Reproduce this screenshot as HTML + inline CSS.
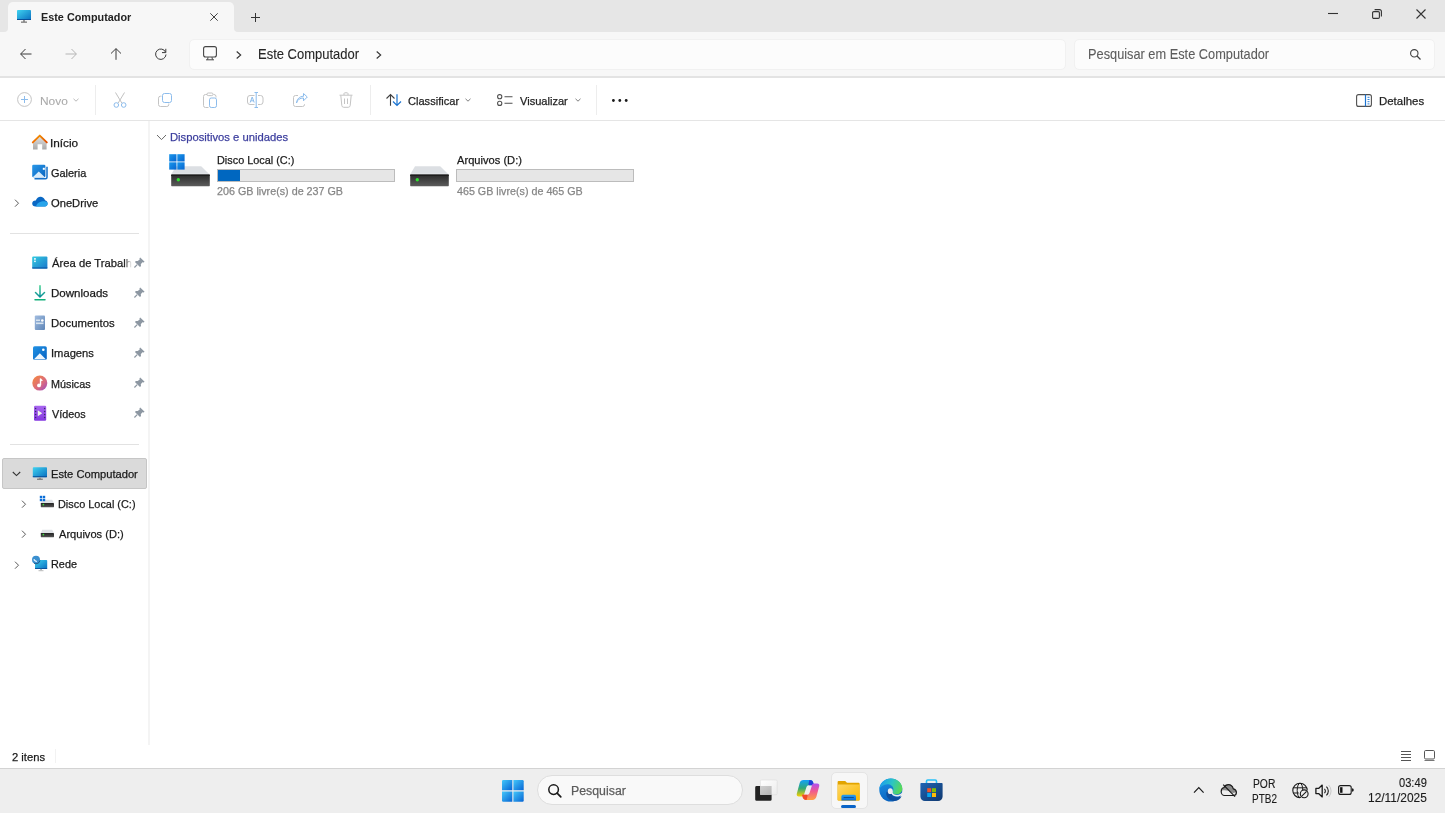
<!DOCTYPE html>
<html><head><meta charset="utf-8">
<style>
*{margin:0;padding:0;box-sizing:border-box}
html,body{width:1445px;height:813px;overflow:hidden;background:#fff;font-family:"Liberation Sans",sans-serif;color:#1a1a1a}
.a{position:absolute}
.t{position:absolute;white-space:nowrap;line-height:1;transform-origin:0 0;-webkit-text-stroke:0.25px currentColor}
svg{position:absolute;overflow:visible}
</style></head><body>
<!-- title bar -->
<div class="a" style="left:0;top:0;width:1445px;height:77px;background:#f7f7f7"></div>
<div class="a" style="left:0;top:0;width:1445px;height:2px;background:#e6e6e6"></div>
<div class="a" style="left:0;top:0;width:8px;height:31.5px;background:#e6e6e6;border-bottom-right-radius:4px"></div>
<div class="a" style="left:234px;top:0;width:1211px;height:31.5px;background:#e6e6e6;border-bottom-left-radius:4px"></div>
<div class="a" style="left:8px;top:2px;width:226px;height:8px;background:#e6e6e6"></div>
<div class="a" style="left:8px;top:2px;width:226px;height:30px;background:#f7f7f7;border-radius:5px 5px 0 0"></div>
<!-- nav border -->
<div class="a" style="left:0;top:76px;width:1445px;height:2px;background:#e3e3e3"></div>
<!-- address box -->
<div class="a" style="left:189px;top:39px;width:877px;height:31px;background:#fcfcfc;border:1px solid #f1f1f1;border-radius:5px"></div>
<!-- search box -->
<div class="a" style="left:1074px;top:39px;width:361px;height:31px;background:#fcfcfc;border:1px solid #f1f1f1;border-radius:5px"></div>
<!-- command bar -->
<div class="a" style="left:0;top:120px;width:1445px;height:1px;background:#e5e5e5"></div>
<div class="a" style="left:95px;top:85px;width:1px;height:30px;background:#ededed"></div>
<div class="a" style="left:370px;top:85px;width:1px;height:30px;background:#ededed"></div>
<div class="a" style="left:596px;top:85px;width:1px;height:30px;background:#ededed"></div>
<!-- sidebar -->
<div class="a" style="left:148px;top:121px;width:1.5px;height:624px;background:#f4f4f4"></div>
<div class="a" style="left:55px;top:749px;width:1px;height:14px;background:#f2f2f2"></div>
<div class="a" style="left:10px;top:232.5px;width:129px;height:1.2px;background:#e2e2e2"></div>
<div class="a" style="left:10px;top:443.5px;width:129px;height:1.2px;background:#e2e2e2"></div>
<div class="a" style="left:2px;top:458px;width:145px;height:31px;background:#dadada;border:1px solid #c6c6c6;border-radius:2px"></div>
<!-- content -->
<div class="a" style="left:217px;top:169px;width:178px;height:13px;background:#e6e6e6;border:1px solid #bcbcbc"></div>
<div class="a" style="left:218px;top:170px;width:22px;height:11px;background:#0067c0"></div>
<div class="a" style="left:456px;top:169px;width:178px;height:13px;background:#e6e6e6;border:1px solid #bcbcbc"></div>
<!-- status bar -->
<!-- taskbar -->
<div class="a" style="left:0;top:768px;width:1445px;height:45px;background:#eeeeee;border-top:1px solid #d3d3d3"></div>
<div class="a" style="left:537px;top:775px;width:206px;height:30px;background:#f9f9f9;border:1px solid #dedede;border-radius:15px"></div>

<!-- tab icon -->
<svg style="left:17px;top:10px" width="14" height="13" viewBox="0 0 14 13">
<defs><linearGradient id="mon" x1="0" y1="0" x2="1" y2="1"><stop offset="0" stop-color="#3fd3f0"/><stop offset="1" stop-color="#0a6fc0"/></linearGradient></defs>
<rect x="0" y="0" width="14" height="10" rx="0.8" fill="url(#mon)"/>
<rect x="0" y="9" width="14" height="1" fill="#0a4f9a"/>
<rect x="6" y="10" width="2" height="2" fill="#9a9a9a"/>
<rect x="4" y="11.5" width="6" height="1.3" fill="#7a7a7a"/>
</svg>
<svg style="left:210px;top:12.5px" width="8" height="8" viewBox="0 0 8 8"><path d="M0.3 0.3L7.7 7.7M7.7 0.3L0.3 7.7" stroke="#3a3a3a" stroke-width="0.95"/></svg>
<svg style="left:251px;top:13px" width="9" height="9" viewBox="0 0 9 9"><path d="M4.5 0V9M0 4.5H9" stroke="#333" stroke-width="1"/></svg>
<!-- window controls -->
<svg style="left:1328px;top:12px" width="10" height="3" viewBox="0 0 10 3"><path d="M0 1.5H10" stroke="#333" stroke-width="1.1"/></svg>
<svg style="left:1372px;top:9px" width="10" height="10" viewBox="0 0 10 10"><rect x="0.6" y="2.6" width="6.8" height="6.8" rx="1.2" fill="none" stroke="#333" stroke-width="1.1"/><path d="M2.6 0.6H7.6A1.8 1.8 0 0 1 9.4 2.4V7.4" fill="none" stroke="#333" stroke-width="1.1"/></svg>
<svg style="left:1416px;top:9px" width="10" height="10" viewBox="0 0 10 10"><path d="M0.5 0.5L9.5 9.5M9.5 0.5L0.5 9.5" stroke="#333" stroke-width="1.1"/></svg>
<!-- nav arrows -->
<svg style="left:20px;top:48px" width="12" height="12" viewBox="0 0 12 12"><path d="M11.5 6H0.8M5.5 1L0.6 6L5.5 11" fill="none" stroke="#3a3a3a" stroke-width="1"/></svg>
<svg style="left:65px;top:48px" width="12" height="12" viewBox="0 0 12 12"><path d="M0.5 6H11.2M6.5 1L11.4 6L6.5 11" fill="none" stroke="#b5b5b5" stroke-width="1"/></svg>
<svg style="left:110px;top:48px" width="12" height="12" viewBox="0 0 12 12"><path d="M6 11.8V0.8M1 5.5L6 0.6L11 5.5" fill="none" stroke="#3a3a3a" stroke-width="1"/></svg>
<svg style="left:155px;top:48px" width="12" height="12" viewBox="0 0 12 12"><path d="M10.6 4.2A5.2 5.2 0 1 0 11 6.5" fill="none" stroke="#3a3a3a" stroke-width="1"/><path d="M10.8 0.8V4.6H7" fill="none" stroke="#3a3a3a" stroke-width="1"/></svg>
<!-- address icons -->
<svg style="left:203px;top:46px" width="14" height="15" viewBox="0 0 14 15"><rect x="0.6" y="0.6" width="12.8" height="10.4" rx="2" fill="none" stroke="#454545" stroke-width="1.1"/><path d="M3 13.8H11M5 11.2L4.6 13.6M9 11.2L9.4 13.6" fill="none" stroke="#454545" stroke-width="1"/></svg>
<svg style="left:236px;top:51px" width="6" height="8" viewBox="0 0 6 8"><path d="M0.7 0.5L4.7 4L0.7 7.5" fill="none" stroke="#333" stroke-width="1.1"/></svg>
<svg style="left:376px;top:51px" width="6" height="8" viewBox="0 0 6 8"><path d="M0.7 0.5L4.7 4L0.7 7.5" fill="none" stroke="#333" stroke-width="1.1"/></svg>
<svg style="left:1410px;top:49px" width="11" height="11" viewBox="0 0 11 11"><circle cx="4.3" cy="4.3" r="3.7" fill="none" stroke="#404040" stroke-width="1.1"/><path d="M7 7L10.5 10.5" stroke="#404040" stroke-width="1.2"/></svg>

<!-- command bar icons -->
<svg style="left:17px;top:92px" width="15" height="15" viewBox="0 0 15 15"><circle cx="7.5" cy="7.5" r="6.9" fill="none" stroke="#c4c4c4" stroke-width="1"/><path d="M7.5 4V11M4 7.5H11" stroke="#8cbcec" stroke-width="1"/></svg>
<svg style="left:73px;top:98px" width="6" height="4" viewBox="0 0 6 4"><path d="M0.5 0.8L3 3.2L5.5 0.8" fill="none" stroke="#b0b0b0" stroke-width="0.9"/></svg>
<svg style="left:113px;top:92px" width="14" height="16" viewBox="0 0 14 16"><path d="M2.5 0.5L8.8 11M11.5 0.5L5.2 11" stroke="#c2c2c2" stroke-width="1"/><circle cx="3.3" cy="13" r="2.3" fill="none" stroke="#8cbcec" stroke-width="1"/><circle cx="10.7" cy="13" r="2.3" fill="none" stroke="#8cbcec" stroke-width="1"/></svg>
<svg style="left:158px;top:93px" width="14" height="14" viewBox="0 0 14 14"><path d="M3.5 3.2H2.5A2 2 0 0 0 0.5 5.2V11.5A2 2 0 0 0 2.5 13.5H8.8A2 2 0 0 0 10.8 11.5V10.5" fill="none" stroke="#c4c4c4" stroke-width="1"/><rect x="4.5" y="0.5" width="9" height="9" rx="2" fill="none" stroke="#8cbcec" stroke-width="1"/></svg>
<svg style="left:203px;top:92px" width="14" height="16" viewBox="0 0 14 16"><path d="M4 2.5H2.5A2 2 0 0 0 0.5 4.5V13.5A2 2 0 0 0 2.5 15.5H5.5M10.5 2.5H11A2 2 0 0 1 13 4.5V5.5" fill="none" stroke="#c4c4c4" stroke-width="1"/><rect x="4" y="1" width="6" height="2.6" rx="1.2" fill="none" stroke="#c4c4c4" stroke-width="1"/><rect x="6.5" y="6" width="7" height="9.5" rx="1.8" fill="none" stroke="#8cbcec" stroke-width="1"/></svg>
<svg style="left:247px;top:92px" width="17" height="16" viewBox="0 0 17 16"><path d="M7.5 3.5H3A2.5 2.5 0 0 0 0.5 6V10A2.5 2.5 0 0 0 3 12.5H7.5M11 3.5H13.5A2.5 2.5 0 0 1 16 6V10A2.5 2.5 0 0 1 13.5 12.5H11" fill="none" stroke="#c4c4c4" stroke-width="1"/><path d="M9.2 0.8V15.2M7.5 0.5H11M7.5 15.5H11" stroke="#8cbcec" stroke-width="1"/><path d="M3.2 10.5L5.2 5L7.2 10.5M3.9 8.8H6.5" fill="none" stroke="#8cbcec" stroke-width="1"/></svg>
<svg style="left:293px;top:93px" width="15" height="14" viewBox="0 0 15 14"><path d="M5 2.5H2.5A2 2 0 0 0 0.5 4.5V11.5A2 2 0 0 0 2.5 13.5H9.5A2 2 0 0 0 11.5 11.5V11" fill="none" stroke="#c4c4c4" stroke-width="1"/><path d="M3.5 10C4.5 6.5 7 5 10.5 5V7.8L14.3 4L10.5 0.5V3.3C6.5 3.3 4 6 3.5 10Z" fill="none" stroke="#8cbcec" stroke-width="1" stroke-linejoin="round"/></svg>
<svg style="left:339px;top:92px" width="14" height="16" viewBox="0 0 14 16"><path d="M0.5 3.2H13.5M5 3V1.5A1 1 0 0 1 6 0.8H8A1 1 0 0 1 9 1.5V3M1.8 3.5L2.8 13.5A2 2 0 0 0 4.8 15.3H9.2A2 2 0 0 0 11.2 13.5L12.2 3.5M5.5 6.5V12M8.5 6.5V12" fill="none" stroke="#c4c4c4" stroke-width="1"/></svg>
<svg style="left:386px;top:94px" width="16" height="12" viewBox="0 0 16 12"><path d="M4.5 11.8V0.8M0.5 4.5L4.5 0.6L8.5 4.5" fill="none" stroke="#404040" stroke-width="1.1"/><path d="M11 0.2V11.2M7 7.5L11 11.4L15 7.5" fill="none" stroke="#1a73d0" stroke-width="1.2"/></svg>
<svg style="left:465px;top:98px" width="6" height="4" viewBox="0 0 6 4"><path d="M0.5 0.8L3 3.2L5.5 0.8" fill="none" stroke="#707070" stroke-width="0.9"/></svg>
<svg style="left:497px;top:94px" width="16" height="12" viewBox="0 0 16 12"><rect x="0.6" y="0.6" width="4.2" height="4.2" rx="2" fill="none" stroke="#505050" stroke-width="1.1"/><rect x="0.6" y="7.2" width="4.2" height="4.2" rx="2" fill="none" stroke="#505050" stroke-width="1.1"/><path d="M7.5 2.7H15.5M7.5 9.3H15.5" stroke="#505050" stroke-width="1.1"/></svg>
<svg style="left:575px;top:98px" width="6" height="4" viewBox="0 0 6 4"><path d="M0.5 0.8L3 3.2L5.5 0.8" fill="none" stroke="#707070" stroke-width="0.9"/></svg>
<svg style="left:612px;top:99px" width="16" height="3" viewBox="0 0 16 3"><circle cx="1.4" cy="1.5" r="1.4" fill="#1a1a1a"/><circle cx="7.8" cy="1.5" r="1.4" fill="#1a1a1a"/><circle cx="14.2" cy="1.5" r="1.4" fill="#1a1a1a"/></svg>
<svg style="left:1356px;top:94px" width="16" height="13" viewBox="0 0 16 13"><rect x="0.6" y="0.6" width="14.8" height="11.8" rx="2" fill="none" stroke="#505050" stroke-width="1.1"/><path d="M9.5 0.6V12.4" stroke="#1a73d0" stroke-width="1.2"/><path d="M11.5 3.3H13.5M11.5 5.5H13.5M11.5 7.7H13.5M11.5 9.9H13.5" stroke="#1a73d0" stroke-width="0.9"/></svg>

<!-- sidebar icons -->
<svg style="left:32px;top:134px" width="16" height="16" viewBox="0 0 16 16">
<defs><linearGradient id="hb" x1="0" y1="0" x2="0" y2="1"><stop offset="0" stop-color="#e2e2e2"/><stop offset="1" stop-color="#a9a9a9"/></linearGradient>
<linearGradient id="hr" x1="0" y1="0" x2="1" y2="0"><stop offset="0" stop-color="#f36d00"/><stop offset="0.5" stop-color="#f08a00"/><stop offset="1" stop-color="#e04b00"/></linearGradient></defs>
<path d="M1 8.5L7.8 2L14.6 8.5V15.6H10.2V10.2H5.6V15.6H1Z" fill="url(#hb)"/>
<path d="M0.8 8.4L7.8 1.6L14.8 8.4" fill="none" stroke="url(#hr)" stroke-width="1.9" stroke-linecap="round" stroke-linejoin="round"/>
</svg>
<svg style="left:32px;top:164px" width="16" height="16" viewBox="0 0 16 16">
<defs><linearGradient id="gb" x1="0" y1="0" x2="1" y2="1"><stop offset="0" stop-color="#2a98e8"/><stop offset="1" stop-color="#0864c0"/></linearGradient></defs>
<path d="M2.5 14.8H13.5A1.5 1.5 0 0 0 15 13.3V2.8" fill="none" stroke="#1570c8" stroke-width="1.5"/>
<rect x="0.2" y="0.8" width="13.2" height="12.4" rx="1.3" fill="url(#gb)"/>
<path d="M1 13L6.8 7.5L12.6 13Z" fill="#d8ecfb"/>
<rect x="10.8" y="3.8" width="2" height="2" fill="#fff"/>
</svg>
<svg style="left:32px;top:196px" width="16" height="12" viewBox="0 0 16 12">
<path d="M3.5 10.5C1.5 10.5 0.2 9.2 0.2 7.5C0.2 5.5 2 4.2 3.8 4.5C4.6 2 6.8 0.5 9 0.8C11 1 12.5 2.5 13 4.2C14.8 4.5 15.6 6 15.6 7.5C15.6 9.2 14.3 10.5 12.6 10.5Z" fill="#0a68c4"/>
<path d="M4 10.5C4.5 8 6.5 6 9.5 5.5C12 5 14 5.5 15.4 6.5C15.7 7 15.7 7.8 15.6 8.2C15.3 9.7 14 10.6 12.6 10.6Z" fill="#28a4ea"/>
</svg>
<svg style="left:32px;top:256px" width="16" height="13" viewBox="0 0 16 13">
<defs><linearGradient id="db" x1="0" y1="0" x2="1" y2="1"><stop offset="0" stop-color="#34cbe0"/><stop offset="1" stop-color="#1a78cc"/></linearGradient></defs>
<rect x="0.2" y="0.6" width="15.2" height="12" rx="1" fill="url(#db)"/>
<rect x="0.2" y="11.4" width="15.2" height="1.2" fill="#0a5aa8"/>
<rect x="2.2" y="2" width="1.5" height="1.8" fill="#fff"/><rect x="2.2" y="4.6" width="1.5" height="1.5" fill="#fff"/>
</svg>
<svg style="left:34px;top:285px" width="12" height="16" viewBox="0 0 12 16">
<defs><linearGradient id="dl" x1="0" y1="0" x2="0" y2="1"><stop offset="0" stop-color="#3ccf8e"/><stop offset="1" stop-color="#0a8c9a"/></linearGradient></defs>
<path d="M6 0.8V11.8M1.5 7.5L6 12L10.5 7.5" fill="none" stroke="url(#dl)" stroke-width="1.5" stroke-linecap="round"/>
<path d="M1 14.7H11" stroke="#12b07a" stroke-width="1.5" stroke-linecap="round"/>
</svg>
<svg style="left:34px;top:315px" width="12" height="16" viewBox="0 0 12 16">
<defs><linearGradient id="doc" x1="0" y1="0" x2="1" y2="1"><stop offset="0" stop-color="#a2bde0"/><stop offset="1" stop-color="#5f86b8"/></linearGradient></defs>
<rect x="0.8" y="0.6" width="10.2" height="14.4" rx="1" fill="url(#doc)"/>
<rect x="2" y="4.5" width="4" height="1.5" fill="#d8e4f0"/><rect x="2" y="7.5" width="7.5" height="1.6" fill="#d8e4f0"/>
<circle cx="8.3" cy="5.5" r="1.3" fill="#fff"/>
</svg>
<svg style="left:32px;top:345px" width="16" height="16" viewBox="0 0 16 16">
<defs><linearGradient id="im" x1="0" y1="0" x2="1" y2="1"><stop offset="0" stop-color="#2292e4"/><stop offset="1" stop-color="#0662c2"/></linearGradient></defs>
<rect x="1" y="1.2" width="13.8" height="13.6" rx="1.6" fill="url(#im)"/>
<path d="M2 14.2L7.8 8.3L13.8 14.2Z" fill="#eef6fd"/>
<circle cx="11.3" cy="4.7" r="1.3" fill="#fff"/>
</svg>
<svg style="left:32px;top:375px" width="16" height="16" viewBox="0 0 16 16">
<defs><linearGradient id="mu" x1="0" y1="0" x2="1" y2="1"><stop offset="0" stop-color="#f98a3a"/><stop offset="0.6" stop-color="#d86a80"/><stop offset="1" stop-color="#9a48c8"/></linearGradient></defs>
<circle cx="7.8" cy="8.1" r="7.5" fill="url(#mu)"/>
<path d="M8.5 3.5V10.2" stroke="#fff" stroke-width="1.4"/><path d="M8.5 3.2L11 5.5L9 6.3Z" fill="#fff"/>
<circle cx="7" cy="10.4" r="1.9" fill="#fff"/>
</svg>
<svg style="left:33px;top:405px" width="14" height="16" viewBox="0 0 14 16">
<defs><linearGradient id="vi" x1="0" y1="0" x2="0" y2="1"><stop offset="0" stop-color="#a866f0"/><stop offset="1" stop-color="#8438e0"/></linearGradient></defs>
<rect x="1" y="0.8" width="12.2" height="15" rx="1.2" fill="url(#vi)"/>
<g fill="#3a2a6a"><circle cx="2.6" cy="3.4" r="0.75"/><circle cx="2.6" cy="6.5" r="0.75"/><circle cx="2.6" cy="9.5" r="0.75"/><circle cx="2.6" cy="12.5" r="0.75"/><circle cx="11.6" cy="3.4" r="0.75"/><circle cx="11.6" cy="6.5" r="0.75"/><circle cx="11.6" cy="9.5" r="0.75"/><circle cx="11.6" cy="12.5" r="0.75"/></g>
<path d="M4.8 5.2L9.2 8.3L4.8 11.3Z" fill="#eef5e8"/>
</svg>
<!-- pins -->
<svg style="left:134px;top:257px" width="11" height="11" viewBox="0 0 11 11"><path d="M6.2 0.4L10.6 4.8L9.6 5.4L8.4 5.2L6.8 7.2L7 9L6 10L0.9 4.9L1.9 3.9L3.7 4.1L5.7 2.5L5.5 1.3Z" fill="#8d97a2"/><path d="M3.2 7.7L0.4 10.5" stroke="#8d97a2" stroke-width="1.2"/></svg>
<svg style="left:134px;top:287px" width="11" height="11" viewBox="0 0 11 11"><path d="M6.2 0.4L10.6 4.8L9.6 5.4L8.4 5.2L6.8 7.2L7 9L6 10L0.9 4.9L1.9 3.9L3.7 4.1L5.7 2.5L5.5 1.3Z" fill="#8d97a2"/><path d="M3.2 7.7L0.4 10.5" stroke="#8d97a2" stroke-width="1.2"/></svg>
<svg style="left:134px;top:317px" width="11" height="11" viewBox="0 0 11 11"><path d="M6.2 0.4L10.6 4.8L9.6 5.4L8.4 5.2L6.8 7.2L7 9L6 10L0.9 4.9L1.9 3.9L3.7 4.1L5.7 2.5L5.5 1.3Z" fill="#8d97a2"/><path d="M3.2 7.7L0.4 10.5" stroke="#8d97a2" stroke-width="1.2"/></svg>
<svg style="left:134px;top:347px" width="11" height="11" viewBox="0 0 11 11"><path d="M6.2 0.4L10.6 4.8L9.6 5.4L8.4 5.2L6.8 7.2L7 9L6 10L0.9 4.9L1.9 3.9L3.7 4.1L5.7 2.5L5.5 1.3Z" fill="#8d97a2"/><path d="M3.2 7.7L0.4 10.5" stroke="#8d97a2" stroke-width="1.2"/></svg>
<svg style="left:134px;top:377px" width="11" height="11" viewBox="0 0 11 11"><path d="M6.2 0.4L10.6 4.8L9.6 5.4L8.4 5.2L6.8 7.2L7 9L6 10L0.9 4.9L1.9 3.9L3.7 4.1L5.7 2.5L5.5 1.3Z" fill="#8d97a2"/><path d="M3.2 7.7L0.4 10.5" stroke="#8d97a2" stroke-width="1.2"/></svg>
<svg style="left:134px;top:407px" width="11" height="11" viewBox="0 0 11 11"><path d="M6.2 0.4L10.6 4.8L9.6 5.4L8.4 5.2L6.8 7.2L7 9L6 10L0.9 4.9L1.9 3.9L3.7 4.1L5.7 2.5L5.5 1.3Z" fill="#8d97a2"/><path d="M3.2 7.7L0.4 10.5" stroke="#8d97a2" stroke-width="1.2"/></svg>

<svg style="left:32px;top:466px" width="16" height="15" viewBox="0 0 16 15">
<rect x="0.8" y="1.2" width="14.2" height="10" rx="0.8" fill="url(#mon)"/>
<rect x="0.8" y="10.2" width="14.2" height="1" fill="#0a4f9a"/>
<rect x="6.8" y="11.2" width="2.2" height="2" fill="#9a9a9a"/>
<rect x="5" y="12.6" width="5.8" height="1.3" fill="#7a7a7a"/>
</svg>
<svg style="left:39px;top:495px" width="16" height="13" viewBox="0 0 16 13">
<defs><linearGradient id="dkf" x1="0" y1="0" x2="0" y2="1"><stop offset="0" stop-color="#222"/><stop offset="1" stop-color="#555"/></linearGradient></defs>
<path d="M3.2 4.8H13.2L15 8H1.8Z" fill="#dfe2e6"/>
<rect x="1.8" y="8" width="13.2" height="4.2" rx="0.4" fill="url(#dkf)"/>
<circle cx="4.4" cy="9.6" r="0.9" fill="#3ed83e"/>
<g fill="#0a6ed8"><rect x="0.8" y="0.8" width="2.4" height="2.4"/><rect x="3.8" y="0.8" width="2.4" height="2.4"/><rect x="0.8" y="3.8" width="2.4" height="2.4"/><rect x="3.8" y="3.8" width="2.4" height="2.4"/></g>
</svg>
<svg style="left:39px;top:525px" width="16" height="13" viewBox="0 0 16 13">
<path d="M3.2 4.8H13.2L15 8H1.8Z" fill="#dfe2e6"/>
<rect x="1.8" y="8" width="13.2" height="4.2" rx="0.4" fill="url(#dkf)"/>
<circle cx="4.4" cy="9.6" r="0.9" fill="#3ed83e"/>
</svg>
<svg style="left:32px;top:555px" width="16" height="17" viewBox="0 0 16 17">
<rect x="3" y="5" width="12.2" height="8.9" rx="0.8" fill="url(#mon)"/>
<rect x="3" y="13" width="12.2" height="0.9" fill="#0a4f9a"/>
<rect x="8.3" y="13.9" width="1.5" height="1.5" fill="#9aa"/><rect x="6.5" y="15.2" width="5" height="1" fill="#bbb"/>
<circle cx="4" cy="4.7" r="4" fill="#3a8fcf"/>
<path d="M1.8 4.3C2.5 5.5 3.5 6.2 4.8 6.6" stroke="#e8f6ff" stroke-width="1.4" fill="none"/>
<path d="M2 8.2A4 4 0 0 0 8 5.5" stroke="#1f4f7a" stroke-width="0.9" fill="none"/>
</svg>
<!-- sidebar chevrons -->
<svg style="left:14px;top:199px" width="6" height="9" viewBox="0 0 6 9"><path d="M1 0.7L4.5 4.2L1 7.7" fill="none" stroke="#5a5a5a" stroke-width="1"/></svg>
<svg style="left:12px;top:471px" width="9" height="6" viewBox="0 0 9 6"><path d="M0.8 1L4.5 4.6L8.2 1" fill="none" stroke="#333" stroke-width="1.1"/></svg>
<svg style="left:21px;top:500px" width="6" height="9" viewBox="0 0 6 9"><path d="M1 0.7L4.5 4.2L1 7.7" fill="none" stroke="#5a5a5a" stroke-width="1"/></svg>
<svg style="left:21px;top:530px" width="6" height="9" viewBox="0 0 6 9"><path d="M1 0.7L4.5 4.2L1 7.7" fill="none" stroke="#5a5a5a" stroke-width="1"/></svg>
<svg style="left:14px;top:560.5px" width="6" height="9" viewBox="0 0 6 9"><path d="M1 0.7L4.5 4.2L1 7.7" fill="none" stroke="#5a5a5a" stroke-width="1"/></svg>
<!-- content -->
<svg style="left:156px;top:134px" width="11" height="7" viewBox="0 0 11 7"><path d="M1 1L5.5 5.6L10 1" fill="none" stroke="#6a6a6a" stroke-width="1"/></svg>
<svg style="left:168px;top:153px" width="44" height="35" viewBox="0 0 44 35">
<defs><linearGradient id="df" x1="0" y1="0" x2="0" y2="1"><stop offset="0" stop-color="#2a2a2a"/><stop offset="1" stop-color="#5c5c5c"/></linearGradient>
<linearGradient id="wl" x1="0" y1="0" x2="1" y2="1"><stop offset="0" stop-color="#1a98ec"/><stop offset="1" stop-color="#0664d0"/></linearGradient></defs>
<path d="M8 13.2H33.2L41.6 21.6H3.2Z" fill="#dcdfe3"/>
<path d="M3.2 21.2H41.6" stroke="#f4f5f6" stroke-width="0.8"/>
<rect x="3.2" y="21.6" width="38.6" height="11.6" rx="0.6" fill="url(#df)"/>
<rect x="3.2" y="21.6" width="38.6" height="1.2" fill="#1a1a1a"/>
<circle cx="10.3" cy="26.8" r="1.7" fill="#30e030"/>
<g fill="url(#wl)"><rect x="1.2" y="1.2" width="7.3" height="7.3"/><rect x="9.3" y="1.2" width="7.3" height="7.3"/><rect x="1.2" y="9.3" width="7.3" height="7.3"/><rect x="9.3" y="9.3" width="7.3" height="7.3"/></g>
</svg>
<svg style="left:407px;top:153px" width="44" height="35" viewBox="0 0 44 35">
<path d="M8 13.2H33.2L41.6 21.6H3.2Z" fill="#dcdfe3"/>
<path d="M3.2 21.2H41.6" stroke="#f4f5f6" stroke-width="0.8"/>
<rect x="3.2" y="21.6" width="38.6" height="11.6" rx="0.6" fill="url(#df)"/>
<rect x="3.2" y="21.6" width="38.6" height="1.2" fill="#1a1a1a"/>
<circle cx="10.3" cy="26.8" r="1.7" fill="#30e030"/>
</svg>
<!-- status bar icons -->
<svg style="left:1401px;top:750px" width="12" height="12" viewBox="0 0 12 12"><path d="M0 1.5H10M0 4.5H10M0 7.5H10M0 10.5H10" stroke="#555" stroke-width="1"/></svg>
<svg style="left:1424px;top:750px" width="12" height="12" viewBox="0 0 12 12"><rect x="0.5" y="0.5" width="10" height="8.5" rx="1.2" fill="none" stroke="#555" stroke-width="1"/><path d="M0.5 10.5H10.5" stroke="#777" stroke-width="1"/></svg>

<!-- taskbar icons -->
<svg style="left:502px;top:780px" width="22" height="22" viewBox="0 0 22 22">
<defs><linearGradient id="wg" x1="0" y1="0" x2="1" y2="1"><stop offset="0" stop-color="#44c8fa"/><stop offset="1" stop-color="#0664d4"/></linearGradient></defs>
<path d="M1.2 0H10.3V10.3H0V1.2A1.2 1.2 0 0 1 1.2 0Z" fill="url(#wg)"/>
<path d="M11.4 0H20.5A1.2 1.2 0 0 1 21.7 1.2V10.3H11.4Z" fill="url(#wg)"/>
<path d="M0 11.4H10.3V21.7H1.2A1.2 1.2 0 0 1 0 20.5Z" fill="url(#wg)"/>
<path d="M11.4 11.4H21.7V20.5A1.2 1.2 0 0 1 20.5 21.7H11.4Z" fill="url(#wg)"/>
</svg>
<svg style="left:548px;top:784px" width="14" height="14" viewBox="0 0 14 14"><circle cx="5.6" cy="5.6" r="4.8" fill="none" stroke="#1a1a1a" stroke-width="1.5"/><path d="M9.1 9.1L12.8 12.8" stroke="#1a1a1a" stroke-width="1.7" stroke-linecap="round"/></svg>
<svg style="left:755px;top:779px" width="24" height="23" viewBox="0 0 24 23">
<defs><linearGradient id="tv" x1="0" y1="0" x2="1" y2="1"><stop offset="0" stop-color="#ffffff"/><stop offset="1" stop-color="#ececec"/></linearGradient>
<linearGradient id="tvg" x1="0" y1="0" x2="1" y2="1"><stop offset="0" stop-color="#d0d0d0"/><stop offset="1" stop-color="#b4b4b4"/></linearGradient></defs>
<rect x="5.4" y="1" width="16.8" height="14.8" rx="1.2" fill="url(#tv)" stroke="#dcdcdc" stroke-width="0.6"/>
<path d="M1.6 7H5.2V15.8H16.6V20.4A1.4 1.4 0 0 1 15.2 21.8H1.6A1.4 1.4 0 0 1 0.2 20.4V8.4A1.4 1.4 0 0 1 1.6 7Z" fill="#222"/>
<rect x="5.2" y="7" width="11.4" height="8.8" fill="url(#tvg)"/>
</svg>
<svg style="left:796px;top:779px" width="24" height="22" viewBox="0 0 24 22">
<defs><linearGradient id="cp1" x1="0" y1="0" x2="0" y2="1"><stop offset="0" stop-color="#12a0f8"/><stop offset="0.5" stop-color="#30a878"/><stop offset="1" stop-color="#f8d000"/></linearGradient>
<linearGradient id="cp2" x1="0" y1="0" x2="0" y2="1"><stop offset="0" stop-color="#b050f0"/><stop offset="0.45" stop-color="#f05890"/><stop offset="1" stop-color="#ffa040"/></linearGradient></defs>
<path d="M7.5 1H14C15.6 1 16.6 1.8 17.2 3.4L18 6.2H12.8C11.6 6.2 10.8 6.9 10.4 8.2L8 15.8C7.6 17 6.8 17.4 5.6 17.4H2.8C1.2 17.4 0.4 16.4 0.8 14.8L3.6 4.2C4.2 2.2 5.6 1 7.5 1Z" fill="url(#cp1)"/>
<path d="M13.8 1C15.5 1 16.6 1.8 17.2 3.4L18 6.2H13.2C12.6 6.2 12.2 5.4 12.6 4.6L13.4 1Z" fill="#2040d8"/>
<path d="M16.5 21H10C8.4 21 7.4 20.2 6.8 18.6L6 15.8H11.2C12.4 15.8 13.2 15.1 13.6 13.8L16 6.2C16.4 5 17.2 4.6 18.4 4.6H21.2C22.8 4.6 23.6 5.6 23.2 7.2L20.4 17.8C19.8 19.8 18.4 21 16.5 21Z" fill="url(#cp2)"/>
<path d="M10.2 21C8.5 21 7.4 20.2 6.8 18.6L6 15.8H11C11.6 15.8 11.8 16.6 11.4 17.4L10.6 21Z" fill="#f04a28"/>
</svg>
<div class="a" style="left:830.5px;top:772px;width:37px;height:36.5px;background:#f7f7f7;border:1px solid #e4e4e4;border-radius:5px"></div>
<svg style="left:837px;top:780px" width="24" height="21" viewBox="0 0 24 21">
<defs><linearGradient id="fy" x1="0" y1="0" x2="1" y2="1"><stop offset="0" stop-color="#ffd766"/><stop offset="1" stop-color="#f9b800"/></linearGradient>
<linearGradient id="fb" x1="0" y1="0" x2="0" y2="1"><stop offset="0" stop-color="#28a0f0"/><stop offset="1" stop-color="#0a68d0"/></linearGradient></defs>
<path d="M1.6 1H8.2L10 2.8H21.6A1 1 0 0 1 22.6 3.8V19.8A0.8 0.8 0 0 1 21.8 20.6H1.4A0.8 0.8 0 0 1 0.6 19.8V2A1 1 0 0 1 1.6 1Z" fill="#e2a400"/>
<path d="M0.6 4.4H22.6V19.8A0.8 0.8 0 0 1 21.8 20.6H1.4A0.8 0.8 0 0 1 0.6 19.8Z" fill="url(#fy)"/>
<path d="M4.4 16.4A1.6 1.6 0 0 1 6 14.8H17.4A1.6 1.6 0 0 1 19 16.4V20.6H4.4Z" fill="url(#fb)"/>
<rect x="6.6" y="17" width="10.2" height="0.9" fill="#0a4a90"/>
</svg>
<div class="a" style="left:841px;top:805px;width:15px;height:3px;background:#0a64c8;border-radius:2px"></div>
<svg style="left:879px;top:778px" width="24" height="24" viewBox="0 0 24 24">
<defs><linearGradient id="eg" x1="0" y1="0.3" x2="1" y2="0.6"><stop offset="0" stop-color="#1a9cf0"/><stop offset="0.5" stop-color="#2cc4c4"/><stop offset="1" stop-color="#5ada50"/></linearGradient>
<linearGradient id="eb" x1="0" y1="0" x2="0.3" y2="1"><stop offset="0" stop-color="#1c94e8"/><stop offset="1" stop-color="#0a64c0"/></linearGradient></defs>
<circle cx="11.8" cy="12" r="11.5" fill="url(#eb)"/>
<path d="M0.3 11C1 5 5.8 0.5 11.8 0.5C18.2 0.5 23.3 5 23.3 10.6C23.3 14.2 20.6 16.4 17.4 16.4C15 16.4 13.6 15.4 13.6 14.2C13.6 13.5 14.4 12.6 14.4 11.2C14.4 8.2 11.6 6.2 8.4 6.2C4.6 6.2 1.6 8.4 0.3 11Z" fill="url(#eg)"/>
<path d="M13.7 14.3C12.8 13 11.8 12.2 10.4 12.2C8.4 12.2 7.3 13.8 7.3 15.6C7.3 19.8 11 23 15.2 23C18.6 23 21.3 21.2 22.6 18.3C21.2 19 19.8 19.3 18.3 19.3C15.6 19.3 13.6 18 12.9 16.7" fill="#0d4f9e"/>
<path d="M13.4 14.0C13.9 15.9 15.6 16.9 17.9 16.9C20 16.9 21.9 16.1 23.3 14.6L23 16.6C21.6 18 19.8 18.6 17.9 18.6C15.4 18.6 13.5 17.5 12.6 15.8Z" fill="#eeeeee"/>
<ellipse cx="11.3" cy="13.2" rx="2.5" ry="2.9" fill="#eeeeee"/>
</svg>
<svg style="left:920px;top:779px" width="23" height="23" viewBox="0 0 23 23">
<defs><linearGradient id="sb" x1="0" y1="0" x2="1" y2="1"><stop offset="0" stop-color="#1e64b4"/><stop offset="1" stop-color="#10386e"/></linearGradient></defs>
<path d="M6.5 5V2.2A1.2 1.2 0 0 1 7.7 1H15.3A1.2 1.2 0 0 1 16.5 2.2V5" fill="none" stroke="#28c0f8" stroke-width="1.6"/>
<path d="M1.2 4H21.8A0.8 0.8 0 0 1 22.6 4.8V17.5A4.5 4.5 0 0 1 18.1 22H4.9A4.5 4.5 0 0 1 0.4 17.5V4.8A0.8 0.8 0 0 1 1.2 4Z" fill="url(#sb)"/>
<rect x="7.2" y="9.2" width="4" height="4" fill="#f35325"/><rect x="12" y="9.2" width="4" height="4" fill="#81bc06"/>
<rect x="7.2" y="14" width="4" height="4" fill="#05a6f0"/><rect x="12" y="14" width="4" height="4" fill="#ffba08"/>
</svg>
<!-- tray -->
<svg style="left:1193px;top:786px" width="12" height="8" viewBox="0 0 12 8"><path d="M1 6.6L5.8 1.6L10.6 6.6" fill="none" stroke="#1a1a1a" stroke-width="1.2"/></svg>
<svg style="left:1220px;top:783px" width="18" height="15" viewBox="0 0 18 15">
<path d="M2.2 7.5C2.5 5.8 3.2 5 4.2 4.6C4.9 2.8 6.5 1.6 8.6 1.6C10.8 1.6 12.6 3.2 13.3 5.4C15 5.8 16.2 7 16.3 9.2L13 10C9 7.5 5.5 7 2.2 7.5Z" fill="#8a8a8a"/>
<path d="M4.5 12.5H13.5C15.2 12.5 16.4 11.2 16.4 9.5C16.4 7.6 15.1 6.2 13.3 5.8C12.6 3.4 10.8 1.6 8.4 1.6C6.4 1.6 4.8 2.8 4 4.5C2.2 5 1.2 6.5 1.2 8.4C1.2 10.8 2.8 12.5 4.5 12.5Z" fill="none" stroke="#1a1a1a" stroke-width="1.2"/>
<path d="M3.2 1.6L15 13.6" stroke="#1a1a1a" stroke-width="1.2"/>
</svg>
<svg style="left:1292px;top:782px" width="18" height="17" viewBox="0 0 18 17">
<path d="M8 15.6A7.2 7.2 0 1 1 15.2 8.4" fill="none" stroke="#1a1a1a" stroke-width="1.1"/>
<ellipse cx="8" cy="8.4" rx="2.8" ry="7.2" fill="none" stroke="#1a1a1a" stroke-width="1"/>
<path d="M1.2 5.8H14.8M1.2 11H6.8" stroke="#1a1a1a" stroke-width="1"/>
<circle cx="12.2" cy="11.8" r="3.9" fill="#eeeeee" stroke="#1a1a1a" stroke-width="1.1"/>
<path d="M9.8 14.2L14.6 9.4" stroke="#1a1a1a" stroke-width="1.1"/>
</svg>
<svg style="left:1315px;top:784px" width="17" height="14" viewBox="0 0 17 14">
<path d="M0.9 4.4H3.6L7.2 1.1V12.9L3.6 9.6H0.9Z" fill="none" stroke="#1a1a1a" stroke-width="1.3" stroke-linejoin="round"/>
<path d="M9.4 4.8A3 3 0 0 1 9.4 9.2M11.4 2.6A6 6 0 0 1 11.4 11.4" fill="none" stroke="#1a1a1a" stroke-width="1.1"/>
<path d="M13.6 1A8.5 8.5 0 0 1 13.6 13" fill="none" stroke="#c8c8c8" stroke-width="1"/>
</svg>
<svg style="left:1338px;top:785px" width="16" height="10" viewBox="0 0 16 10">
<rect x="0.6" y="0.6" width="12.6" height="8.8" rx="2" fill="none" stroke="#1a1a1a" stroke-width="1.1"/>
<rect x="2.1" y="2.2" width="2.4" height="5.6" fill="#111"/>
<path d="M14 3.2A1.8 1.8 0 0 1 14 6.8Z" fill="#1a1a1a"/>
</svg>
<div class="t" style="left:41.27px;top:11.08px;font-size:11.60px;color:#222;font-weight:bold;transform:scaleX(0.9339);-webkit-text-stroke:0">Este Computador</div>
<div class="t" style="left:258.33px;top:47.40px;font-size:14.30px;color:#262626;transform:scaleX(0.9090);-webkit-text-stroke:0.1px currentColor">Este Computador</div>
<div class="t" style="left:1087.95px;top:47.10px;font-size:14.30px;color:#5c5c5c;transform:scaleX(0.8938);-webkit-text-stroke:0.1px currentColor">Pesquisar em Este Computador</div>
<div class="t" style="left:39.61px;top:94.78px;font-size:11.60px;color:#ababab;transform:scaleX(1.0298);-webkit-text-stroke:0.1px currentColor">Novo</div>
<div class="t" style="left:407.85px;top:94.88px;font-size:11.60px;color:#1f1f1f;transform:scaleX(0.9554)">Classificar</div>
<div class="t" style="left:520.34px;top:94.88px;font-size:11.60px;color:#1f1f1f;transform:scaleX(0.9548)">Visualizar</div>
<div class="t" style="left:1378.76px;top:94.88px;font-size:11.60px;color:#1f1f1f;transform:scaleX(0.9859)">Detalhes</div>
<div class="t" style="left:50.31px;top:136.98px;font-size:11.60px;color:#1a1a1a;transform:scaleX(1.0158)">Início</div>
<div class="t" style="left:50.85px;top:166.98px;font-size:11.60px;color:#1a1a1a;transform:scaleX(0.9422)">Galeria</div>
<div class="t" style="left:50.87px;top:197.08px;font-size:11.60px;color:#1a1a1a;transform:scaleX(0.9638)">OneDrive</div>
<div class="t" style="left:50.85px;top:287.48px;font-size:11.60px;color:#1a1a1a;transform:scaleX(0.9959)">Downloads</div>
<div class="t" style="left:50.86px;top:317.48px;font-size:11.60px;color:#1a1a1a;transform:scaleX(0.9785)">Documentos</div>
<div class="t" style="left:50.76px;top:347.48px;font-size:11.60px;color:#1a1a1a;transform:scaleX(0.9650)">Imagens</div>
<div class="t" style="left:50.91px;top:377.58px;font-size:11.60px;color:#1a1a1a;transform:scaleX(0.9325)">Músicas</div>
<div class="t" style="left:51.75px;top:407.58px;font-size:11.60px;color:#1a1a1a;transform:scaleX(0.9315)">Vídeos</div>
<div class="t" style="left:50.88px;top:467.88px;font-size:11.60px;color:#1a1a1a;transform:scaleX(0.9625)">Este Computador</div>
<div class="t" style="left:58.20px;top:498.28px;font-size:11.60px;color:#1a1a1a;transform:scaleX(0.9400)">Disco Local (C:)</div>
<div class="t" style="left:59.07px;top:528.08px;font-size:11.60px;color:#1a1a1a;transform:scaleX(0.9558)">Arquivos (D:)</div>
<div class="t" style="left:50.90px;top:558.38px;font-size:11.60px;color:#1a1a1a;transform:scaleX(0.9363)">Rede</div>
<div class="t" style="left:169.87px;top:131.48px;font-size:11.60px;color:#3d3f9e;transform:scaleX(0.9693)">Dispositivos e unidades</div>
<div class="t" style="left:217.20px;top:154.38px;font-size:11.60px;color:#1a1a1a;transform:scaleX(0.9375)">Disco Local (C:)</div>
<div class="t" style="left:217.46px;top:185.28px;font-size:11.60px;color:#858585;transform:scaleX(0.9270)">206 GB livre(s) de 237 GB</div>
<div class="t" style="left:457.07px;top:154.38px;font-size:11.60px;color:#1a1a1a;transform:scaleX(0.9603)">Arquivos (D:)</div>
<div class="t" style="left:456.86px;top:185.28px;font-size:11.60px;color:#858585;transform:scaleX(0.9248)">465 GB livre(s) de 465 GB</div>
<div class="t" style="left:12.34px;top:750.68px;font-size:11.60px;color:#1a1a1a;transform:scaleX(0.9667)">2 itens</div>
<div class="t" style="left:570.88px;top:784.20px;font-size:13.70px;color:#5c5c5c;transform:scaleX(0.9011)">Pesquisar</div>
<div class="t" style="left:1253.25px;top:777.89px;font-size:12.30px;color:#1a1a1a;transform:scaleX(0.8379);-webkit-text-stroke:0.12px currentColor">POR</div>
<div class="t" style="left:1252.08px;top:792.99px;font-size:12.30px;color:#1a1a1a;transform:scaleX(0.8104);-webkit-text-stroke:0.12px currentColor">PTB2</div>
<div class="t" style="left:1399.45px;top:777.19px;font-size:12.30px;color:#1a1a1a;transform:scaleX(0.9047);-webkit-text-stroke:0.12px currentColor">03:49</div>
<div class="t" style="left:1368.21px;top:792.19px;font-size:12.30px;color:#1a1a1a;transform:scaleX(0.9692);-webkit-text-stroke:0.12px currentColor">12/11/2025</div>
<div class="a" style="left:51.77px;top:256.98px;width:80.73px;height:16px;overflow:hidden;-webkit-mask-image:linear-gradient(to right,#000 90%,transparent)"><div class="t" style="left:0;top:0;font-size:11.60px;color:#1a1a1a;transform:scaleX(0.9700)">Área de Trabalho</div></div>
</body></html>
